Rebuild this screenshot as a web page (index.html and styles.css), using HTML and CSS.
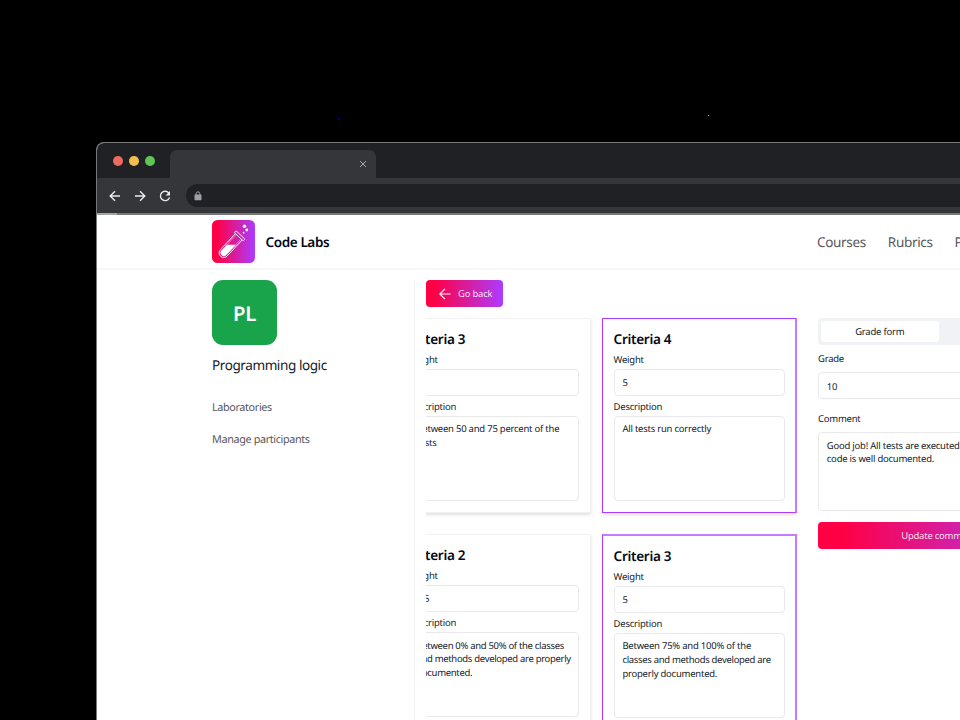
FILE: index.html
```
<!DOCTYPE html>
<html lang="en">
<head>
<meta charset="utf-8">
<title>Code Labs</title>
<link rel="stylesheet" href="styles.css">
</head>
<body>
<svg class="specks" viewBox="0 0 960 142"><path d="M338 118h2v1h-2z" fill="#0000b8"/><path d="M708 115h1v1h-1z" fill="#bbb"/></svg>
<div class="window">
  <div class="tabs">
    <div class="lights"><i class="red"></i><i class="yellow"></i><i class="green"></i></div>
    <div class="tab"><svg width="8" height="8" viewBox="0 0 8 8"><path d="M1 1l6 6M7 1L1 7" stroke="#b4b7b9" stroke-width=".9"/></svg></div>
  </div>
  <div class="toolbar">
    <svg class="tool" viewBox="0 0 12 12"><path d="M11 6H1.6M6 1.2L1.2 6L6 10.8"/></svg>
    <svg class="tool" viewBox="0 0 12 12"><path d="M1 6h9.4M6 1.2L10.8 6L6 10.8"/></svg>
    <svg class="tool" viewBox="0 0 12 12"><path d="M10 3.2A4.7 4.7 0 1 0 10.6 7.4"/><path d="M11 1v4.4H6.6z" fill="#e8eaed" stroke="none"/></svg>
    <div class="address"><svg width="8" height="10" viewBox="0 0 8 10"><path d="M2.2 4V2.6a1.8 1.8 0 0 1 3.6 0V4" fill="none" stroke="#9aa0a6"/><rect x=".5" y="3.4" width="7" height="5.8" rx=".7" fill="#9aa0a6"/></svg></div>
  </div>
  <div class="loadline"></div>
  <header class="nav">
    <svg class="logo" viewBox="0 0 43 43">
      <defs><linearGradient id="brand"><stop offset=".1" stop-color="#ff0044"/><stop offset="1" stop-color="#ad3bff"/></linearGradient></defs>
      <rect width="43" height="43" rx="5.5" fill="url(#brand)"/>
      <g transform="translate(18 26.2) rotate(43)" fill="none" stroke="#fff" stroke-width=".9">
        <path d="M-4.6-13V9.2a4.6 4.6 0 0 0 9.2 0V-13"/>
        <path d="M-3.2 -12V9M3.2-12V9" stroke-width=".4"/>
        <rect x="-6.2" y="-15.4" width="12.4" height="2.5" rx="1.1"/>
        <path d="M-3.3 1.2L3.3-5.2V9a3.3 3.3 0 0 1-6.6 0z" fill="#fff" stroke="none"/>
      </g>
      <g fill="#fff"><circle cx="32.5" cy="6.3" r="1.7"/><circle cx="34.8" cy="10" r="1.4"/><circle cx="31.6" cy="12.7" r=".9"/></g>
    </svg>
    <span class="brand">Code Labs</span>
    <nav><a>Courses</a><a>Rubrics</a><a>Profile</a></nav>
  </header>
  <div class="page">
    <aside>
      <div class="avatar">PL</div>
      <h1>Programming logic</h1>
      <a>Laboratories</a>
      <a>Manage participants</a>
    </aside>
    <main>
      <button class="back"><svg viewBox="0 0 12 12"><path d="M11.5 6H.8M6 .8L.8 6L6 11.2"/></svg>Go back</button>
      <div class="content">
        <div class="rubric">
          <section class="card">
            <h2>Criteria 3</h2><label>Weight</label><div class="input"></div>
            <label>Description</label><div class="area">Between 50 and 75 percent of the<br>tests</div>
          </section>
          <section class="card picked">
            <h2>Criteria 4</h2><label>Weight</label><div class="input">5</div>
            <label>Description</label><div class="area">All tests run correctly</div>
          </section>
          <section class="card">
            <h2>Criteria 2</h2><label>Weight</label><div class="input">2.5</div>
            <label>Description</label><div class="area tight">Between 0% and 50% of the classes<br>and methods developed are properly<br>documented.</div>
          </section>
          <section class="card picked lower">
            <h2>Criteria 3</h2><label>Weight</label><div class="input">5</div>
            <label>Description</label><div class="area">Between 75% and 100% of the<br><span class="tight">classes and methods developed are</span><br>properly documented.</div>
          </section>
        </div>
        <div class="grading">
          <div class="switch"><span class="on">Grade form</span><span></span></div>
          <label class="grade">Grade</label><div class="input">10</div>
          <label class="comment">Comment</label>
          <div class="area">Good job! All tests are executed and the<br>code is well documented.</div>
          <button class="update">Update comment</button>
        </div>
      </div>
    </main>
  </div>
</div>
</body>
</html>
```

FILE: styles.css
```
* { box-sizing: border-box; }
body { margin: 0; height: 720px; overflow: hidden; background: #000; padding: 0; font: 9.48px/13.54px "Noto Sans", sans-serif; letter-spacing: -.22px; color: #141a28; text-rendering: geometricPrecision; }
.specks { display: block; width: 960px; height: 142px; }
.window { margin-left: 96px; width: 1076px; height: 578px; background: #fff; border: 1px solid #76787a; border-bottom: 0; border-radius: 8px 8px 0 0; overflow: hidden; }
.tabs { height: 35px; background: #202124; display: flex; }
.lights { display: flex; gap: 6px; padding: 13px 0 0 15.5px; width: 73px; }
.lights i { width: 10.2px; height: 10.4px; border-radius: 50%; flex: none; }
.red { background: #ed6a5e; }
.yellow { background: #f5bf4f; }
.green { background: #61c554; }
.tab { width: 206px; margin-top: 7px; background: #35363a; border-radius: 7px 7px 0 0; display: flex; justify-content: flex-end; padding: 10px 9px 0 0; }
.toolbar { height: 35px; background: #35363a; display: flex; align-items: center; padding-left: 12px; }
.tool { width: 12px; height: 12px; margin-right: 13px; flex: none; fill: none; stroke: #e8eaed; stroke-width: 1.4; }
.address { height: 23px; width: 900px; flex: none; margin-left: 2px; border-radius: 12px; background: #202124; display: flex; align-items: center; padding-left: 8px; }
.loadline { height: 2px; background: linear-gradient(90deg, #a4a4a4 20px, #777 20px); }
.nav { height: 55px; border-bottom: 2px solid #f6f6f7; display: flex; align-items: center; padding: 0 0 0 115px; }
.logo { width: 43px; height: 43px; flex: none; }
.brand { font-size: 13.54px; font-weight: 600; letter-spacing: -.4px; margin: 3px 0 0 10.5px; width: 551.5px; flex: none; color: #020817; }
.nav nav { display: flex; gap: 22px; font-size: 13.54px; letter-spacing: -.35px; color: #58585c; padding-top: 3px; }
.page { display: flex; padding-left: 115px; margin-top: 10px; }
aside { width: 203px; height: 500px; flex: none; border-right: 1px solid #f3f3f6; }
.avatar { width: 65px; height: 65px; border-radius: 11px; background: #19a34a; color: #fff; font-size: 20.3px; font-weight: 600; line-height: 67px; text-align: center; }
h1 { margin: 10.4px 0 23.6px; font-size: 13.54px; line-height: 20px; font-weight: 400; letter-spacing: -.42px; }
aside a { display: block; height: 32.4px; line-height: 18px; font-size: 10.83px; letter-spacing: -.37px; color: #58585f; }
main { padding-left: 11px; flex: none; }
button { border: 0; font: inherit; letter-spacing: inherit; color: rgba(255,255,255,.87); background: linear-gradient(90deg, #ff0044 10%, #ad3bff); border-radius: 4px; display: flex; align-items: center; justify-content: center; height: 27px; }
.back { width: 77.4px; padding: 0 0 0 2px; gap: 7px; }
.back svg { width: 12px; height: 12px; fill: none; stroke: #fff; stroke-width: 1.2; }
.content { display: flex; margin-top: 11px; }
.rubric { width: 371px; height: 440px; flex: none; overflow: hidden; margin-right: 21px; display: grid; grid-template-columns: 195px 195px; grid-auto-rows: 195.2px; column-gap: 11px; row-gap: 21.2px; justify-content: end; }
.card { border: 1px solid #f1f1f5; padding: 10.6px; box-shadow: 0 2px 3px rgba(0,0,0,.12); }
.picked { border-color: #ad3bff; border-right: 2px solid #c67aff; padding-right: 9.6px; }
.lower { border-top: 2px solid #c67aff; padding-top: 10.2px; }
h2 { font-size: 13.54px; line-height: 19px; font-weight: 600; letter-spacing: -.3px; margin: 0; color: #020817; }
label { display: block; }
.card label { line-height: 15px; padding-top: .5px; margin-top: 3px; }
.input { height: 27px; border: 1px solid #e9e9ec; border-radius: 4px; padding: 6.5px 7.8px; margin-top: 2.5px; }
.area { height: 85px; border: 1px solid #e9e9ec; border-radius: 4px; padding: 5.6px 7.8px; margin-top: 1.8px; white-space: nowrap; }
.card .input { margin-top: 1.5px; }
.tight { letter-spacing: -.3px; }
.grading { width: 241px; flex: none; }
.switch { height: 27px; background: #f1f2f5; border-radius: 4px; display: flex; padding: 3px; }
.switch span { width: 50%; line-height: 22px; text-align: center; }
.switch .on { background: #fff; border-radius: 3px; }
.grade { margin-top: 7.4px; }
.grading .input { margin-top: 6.1px; }
.comment { margin-top: 13px; }
.grading .area { height: 79px; margin-top: 6.5px; }
.update { width: 100%; margin-top: 11px; }
```
